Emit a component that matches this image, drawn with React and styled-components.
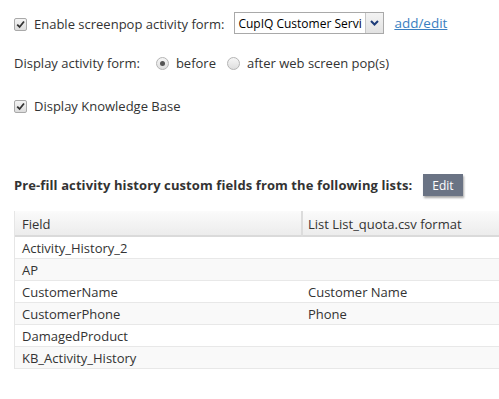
import React from "react";
import styled, { createGlobalStyle } from "styled-components";

const Global = createGlobalStyle`
  html, body { margin: 0; padding: 0; background: #fff; }
  body { font-family: "Open Sans", "Noto Sans", sans-serif; font-size: 13px; color: #333; }
`;

const Page = styled.div`
  width: 499px;
  height: 399px;
  overflow: hidden;
  padding: 12px 0 0 14px;
  box-sizing: border-box;
`;

const Row = styled.div`
  display: flex;
  align-items: center;
  height: 22px;
  margin-bottom: ${(p) => p.$mb || 0}px;
  white-space: nowrap;
`;

const Check = styled.span`
  width: 11px;
  height: 11px;
  border: 1px solid #a9a9a9;
  border-radius: 2px;
  background: linear-gradient(#f4f4f4, #dcdcdc);
  display: inline-flex;
  align-items: center;
  justify-content: center;
  margin-right: 7px;
  flex: none;
  position: relative;
  top: ${(p) => p.$dy || 0}px;
`;

const Label = styled.span`
  margin-right: ${(p) => p.$mr || 0}px;
  position: relative;
  top: ${(p) => p.$dy || 0}px;
`;

const Select = styled.div`
  display: flex;
  align-items: stretch;
  height: 22px;
  width: 150px;
  box-sizing: border-box;
  border: 1px solid #a9a9a9;
  background: #fff;
  margin-right: 10px;
`;

const SelectText = styled.span`
  flex: 1;
  overflow: hidden;
  padding-left: 3px;
  line-height: 21px;
  font-size: 12px;
  color: #000;
`;

const SelectBtn = styled.span`
  width: 17px;
  border-left: 1px solid #c6c6c6;
  background: linear-gradient(#f3f3f3, #e2e2e2);
  display: flex;
  align-items: center;
  justify-content: center;
`;

const Link = styled.a`
  color: #3a7fc1;
  text-decoration: underline;
  font-size: 13.5px;
`;

const Radio = styled.span`
  width: 11px;
  height: 11px;
  border-radius: 50%;
  border: 1px solid #b4b4b4;
  background: linear-gradient(#f6f6f6, #dedede);
  display: inline-flex;
  align-items: center;
  justify-content: center;
  margin: 0 7px 0 0;
  flex: none;
  &::after {
    content: "";
    display: ${(p) => (p.$on ? "block" : "none")};
    width: 5px;
    height: 5px;
    border-radius: 50%;
    background: #555;
  }
`;

const Heading = styled.div`
  display: flex;
  align-items: center;
  font-weight: bold;
  margin-top: 57px;
  height: 22px;
  white-space: nowrap;
  letter-spacing: 0.1px;
`;

const EditBtn = styled.button`
  margin-left: 11px;
  height: 22px;
  padding: 0 9px;
  border: none;
  background: #6a7384;
  color: #fff;
  font-family: inherit;
  font-size: 12px;
  box-shadow: 1px 2px 2px rgba(0, 0, 0, 0.35);
`;

const Table = styled.div`
  margin-top: 15px;
  width: 500px;
  border-left: 1px solid #e6e6e6;
`;

const Head = styled.div`
  display: grid;
  grid-template-columns: 286px 1fr;
  height: 24px;
  background: linear-gradient(#fbfbfb, #ececec);
  border-bottom: 2px solid #dadada;
`;

const HeadCell = styled.div`
  padding-left: ${(p) => (p.$sep ? 5 : 7)}px;
  line-height: 26px;
  border-left: ${(p) => (p.$sep ? "2px solid #dcdcdc" : "none")};
`;

const BodyRow = styled.div`
  display: grid;
  grid-template-columns: 286px 1fr;
  height: 21px;
  border-bottom: 1px solid #e8e8e8;
  background: ${(p) => (p.$alt ? "#f9f9f9" : "#fff")};
`;

const Cell = styled.div`
  padding-left: 7px;
  line-height: 23px;
`;

const rows = [
  ["Activity_History_2", ""],
  ["AP", ""],
  ["CustomerName", "Customer Name"],
  ["CustomerPhone", "Phone"],
  ["DamagedProduct", ""],
  ["KB_Activity_History", ""],
];

const Tick = () => (
  <svg width="9" height="9" viewBox="0 0 9 9">
    <path d="M1.2 4.6 L3.6 7 L8 1.5" stroke="#333" strokeWidth="1.8" fill="none" />
  </svg>
);

export default function App() {
  return (
    <>
      <Global />
      <Page>
        <Row $mb={18}>
          <Check $dy={1}><Tick /></Check>
          <Label $mr={10} $dy={1}>Enable screenpop activity form:</Label>
          <Select>
            <SelectText>CupIQ Customer Servi</SelectText>
            <SelectBtn>
              <svg width="9" height="6" viewBox="0 0 9 6">
                <path d="M1 1 L4.5 4.5 L8 1" stroke="#1c3b78" strokeWidth="2" fill="none" />
              </svg>
            </SelectBtn>
          </Select>
          <Link href="#">add/edit</Link>
        </Row>
        <Row $mb={21}>
          <Label $mr={16}>Display activity form:</Label>
          <Radio $on />
          <Label $mr={11}>before</Label>
          <Radio />
          <Label>after web screen pop(s)</Label>
        </Row>
        <Row>
          <Check><Tick /></Check>
          <Label>Display Knowledge Base</Label>
        </Row>
        <Heading>
          Pre-fill activity history custom fields from the following lists:
          <EditBtn>Edit</EditBtn>
        </Heading>
        <Table>
          <Head>
            <HeadCell>Field</HeadCell>
            <HeadCell $sep>List List_quota.csv format</HeadCell>
          </Head>
          {rows.map(([a, b], i) => (
            <BodyRow key={a} $alt={i % 2 === 1}>
              <Cell>{a}</Cell>
              <Cell>{b}</Cell>
            </BodyRow>
          ))}
        </Table>
      </Page>
    </>
  );
}
